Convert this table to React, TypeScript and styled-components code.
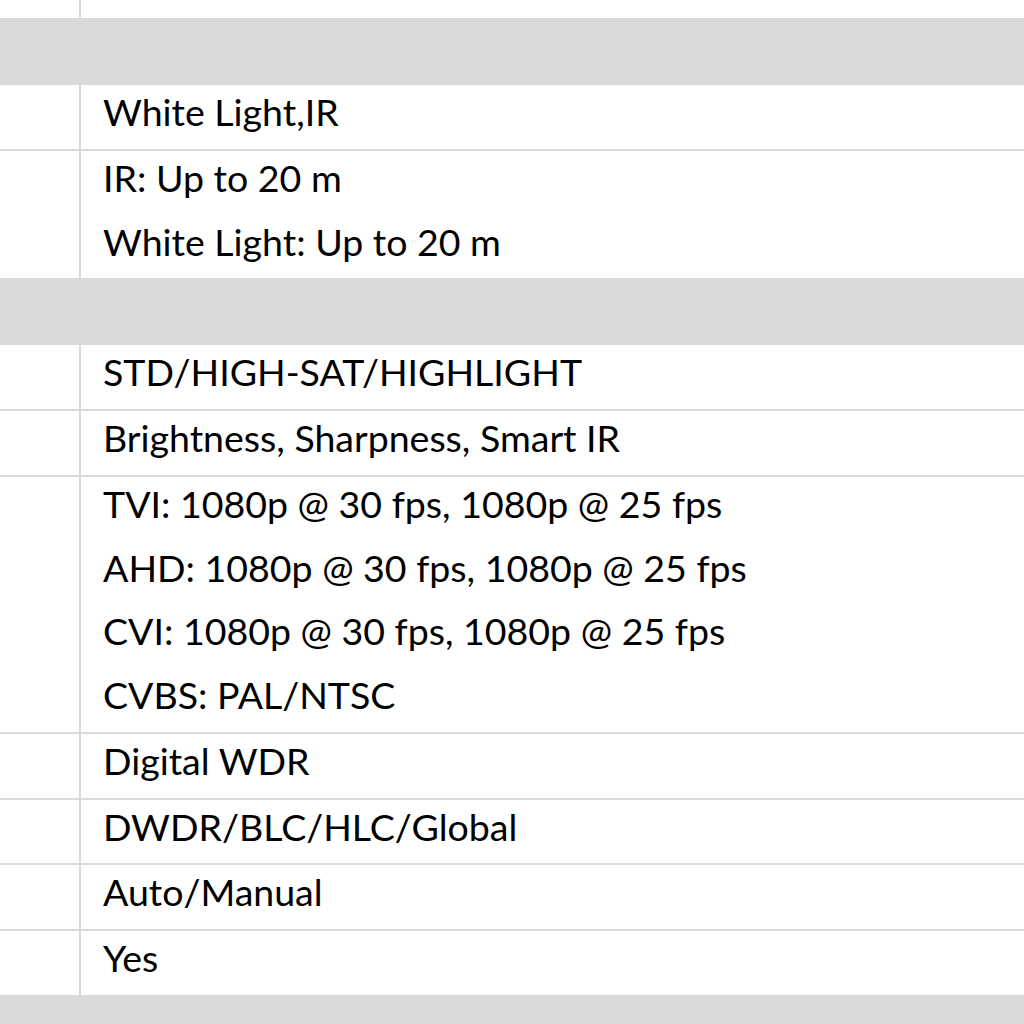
import React from 'react';
import styled, { createGlobalStyle } from 'styled-components';

type SpecRow = { kind: 'section' } | { kind: 'row'; lines: string[] };

const ROWS: SpecRow[] = [
    { kind: 'section' },
    { kind: 'row', lines: ['White Light,IR'] },
    { kind: 'row', lines: ['IR: Up to 20 m', 'White Light: Up to 20 m'] },
    { kind: 'section' },
    { kind: 'row', lines: ['STD/HIGH-SAT/HIGHLIGHT'] },
    { kind: 'row', lines: ['Brightness, Sharpness, Smart IR'] },
    {
        kind: 'row',
        lines: [
            'TVI: 1080p @ 30 fps, 1080p @ 25 fps',
            'AHD: 1080p @ 30 fps, 1080p @ 25 fps',
            'CVI: 1080p @ 30 fps, 1080p @ 25 fps',
            'CVBS: PAL/NTSC',
        ],
    },
    { kind: 'row', lines: ['Digital WDR'] },
    { kind: 'row', lines: ['DWDR/BLC/HLC/Global'] },
    { kind: 'row', lines: ['Auto/Manual'] },
    { kind: 'row', lines: ['Yes'] },
    { kind: 'section' },
];

const GlobalStyle = createGlobalStyle`
    html, body {
        margin: 0;
        padding: 0;
        background: #ffffff;
        overflow: hidden;
    }
`;

const App: React.FC = () => {
    return (
        <>
            <GlobalStyle />
            <Table>
                <Row $last>
                    <LabelCell />
                    <ValueCell $height={18} />
                </Row>
                {ROWS.map((row, i) => {
                    if (row.kind === 'section') return <SectionBand key={i} />;
                    const beforeSection = ROWS[i + 1]?.kind === 'section';
                    return (
                        <Row key={i} $last={beforeSection}>
                            <LabelCell />
                            <ValueCell>
                                {row.lines.map((line) => (
                                    <Line key={line}>{line}</Line>
                                ))}
                            </ValueCell>
                        </Row>
                    );
                })}
            </Table>
        </>
    );
};

const Table = styled.div`
    width: 1024px;
    height: 1024px;
    overflow: hidden;
    display: flex;
    flex-direction: column;
    font-family: Lato, 'Open Sans', sans-serif;
    color: #000000;
`;

const Row = styled.div<{ $last?: boolean }>`
    display: grid;
    grid-template-columns: 81px 1fr;
    flex-shrink: 0;
    border-bottom: ${(props) => (props.$last ? 'none' : '2px solid #dadada')};
`;

const LabelCell = styled.div`
    border-right: 2px solid #dadada;
`;

const ValueCell = styled.div<{ $height?: number }>`
    padding-left: 22px;
    ${(props) => (props.$height ? `height: ${props.$height}px;` : '')}
`;

const Line = styled.div`
    height: 63.75px;
    line-height: 53px;
    font-size: 37.5px;
    white-space: nowrap;
`;

const SectionBand = styled.div`
    height: 67px;
    flex-shrink: 0;
    background: #d9d9d9;
`;

export default App;
